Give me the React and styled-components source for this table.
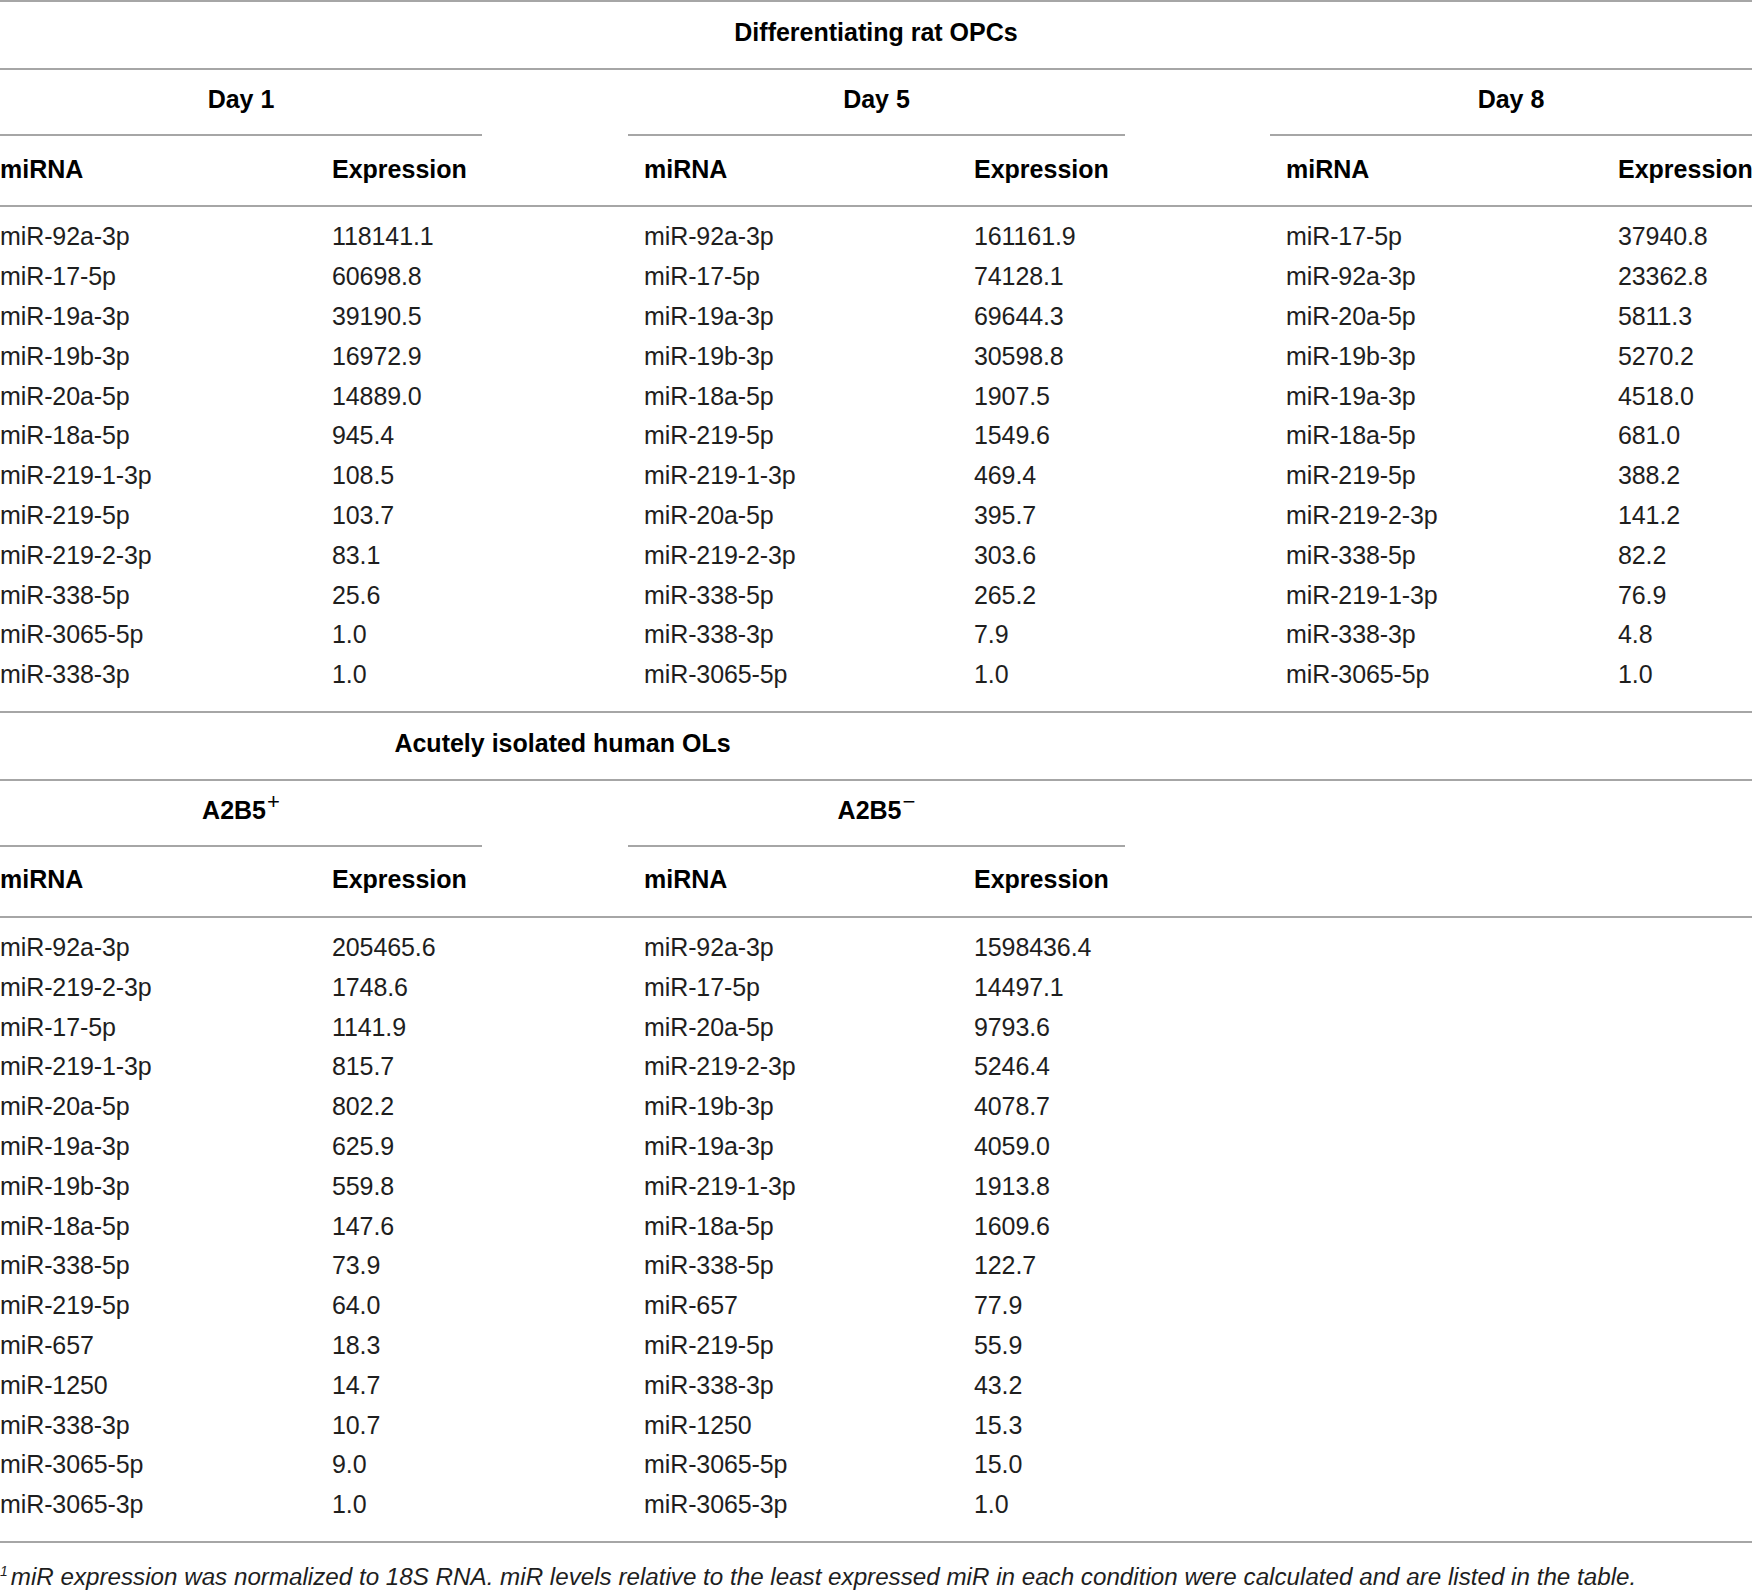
import React from 'react';
import styled, { createGlobalStyle } from 'styled-components';

// --- Data ---

const ratGroups = [
  {
    label: 'Day 1',
    rows: [
      ['miR-92a-3p', '118141.1'],
      ['miR-17-5p', '60698.8'],
      ['miR-19a-3p', '39190.5'],
      ['miR-19b-3p', '16972.9'],
      ['miR-20a-5p', '14889.0'],
      ['miR-18a-5p', '945.4'],
      ['miR-219-1-3p', '108.5'],
      ['miR-219-5p', '103.7'],
      ['miR-219-2-3p', '83.1'],
      ['miR-338-5p', '25.6'],
      ['miR-3065-5p', '1.0'],
      ['miR-338-3p', '1.0'],
    ],
  },
  {
    label: 'Day 5',
    rows: [
      ['miR-92a-3p', '161161.9'],
      ['miR-17-5p', '74128.1'],
      ['miR-19a-3p', '69644.3'],
      ['miR-19b-3p', '30598.8'],
      ['miR-18a-5p', '1907.5'],
      ['miR-219-5p', '1549.6'],
      ['miR-219-1-3p', '469.4'],
      ['miR-20a-5p', '395.7'],
      ['miR-219-2-3p', '303.6'],
      ['miR-338-5p', '265.2'],
      ['miR-338-3p', '7.9'],
      ['miR-3065-5p', '1.0'],
    ],
  },
  {
    label: 'Day 8',
    rows: [
      ['miR-17-5p', '37940.8'],
      ['miR-92a-3p', '23362.8'],
      ['miR-20a-5p', '5811.3'],
      ['miR-19b-3p', '5270.2'],
      ['miR-19a-3p', '4518.0'],
      ['miR-18a-5p', '681.0'],
      ['miR-219-5p', '388.2'],
      ['miR-219-2-3p', '141.2'],
      ['miR-338-5p', '82.2'],
      ['miR-219-1-3p', '76.9'],
      ['miR-338-3p', '4.8'],
      ['miR-3065-5p', '1.0'],
    ],
  },
];

const humanGroups = [
  {
    label: 'A2B5',
    sign: '+',
    rows: [
      ['miR-92a-3p', '205465.6'],
      ['miR-219-2-3p', '1748.6'],
      ['miR-17-5p', '1141.9'],
      ['miR-219-1-3p', '815.7'],
      ['miR-20a-5p', '802.2'],
      ['miR-19a-3p', '625.9'],
      ['miR-19b-3p', '559.8'],
      ['miR-18a-5p', '147.6'],
      ['miR-338-5p', '73.9'],
      ['miR-219-5p', '64.0'],
      ['miR-657', '18.3'],
      ['miR-1250', '14.7'],
      ['miR-338-3p', '10.7'],
      ['miR-3065-5p', '9.0'],
      ['miR-3065-3p', '1.0'],
    ],
  },
  {
    label: 'A2B5',
    sign: '\u2212',
    rows: [
      ['miR-92a-3p', '1598436.4'],
      ['miR-17-5p', '14497.1'],
      ['miR-20a-5p', '9793.6'],
      ['miR-219-2-3p', '5246.4'],
      ['miR-19b-3p', '4078.7'],
      ['miR-19a-3p', '4059.0'],
      ['miR-219-1-3p', '1913.8'],
      ['miR-18a-5p', '1609.6'],
      ['miR-338-5p', '122.7'],
      ['miR-657', '77.9'],
      ['miR-219-5p', '55.9'],
      ['miR-338-3p', '43.2'],
      ['miR-1250', '15.3'],
      ['miR-3065-5p', '15.0'],
      ['miR-3065-3p', '1.0'],
    ],
  },
];

// name column / value column for each group (grid lines 1,4,7)
const nameCol = [1, 4, 7];
const valueCol = [2, 5, 8];

// --- Styled Components ---

const GlobalStyle = createGlobalStyle`
  html, body {
    margin: 0;
    padding: 0;
    background: #ffffff;
  }
  body {
    width: 1752px;
    overflow: hidden;
    font-family: 'Liberation Sans', Arial, sans-serif;
    color: #1e1e1e;
  }
`;

const LINE = '2px solid #a6a6a6';

const Table = styled.div`
  width: 1752px;
  border-top: ${LINE};
`;

// full width band with a centered bold title
const TitleBand = styled.div`
  display: grid;
  grid-template-columns: ${(p) => p.$span}px 1fr;
  height: 66px;
  border-bottom: ${LINE};
`;

const TitleText = styled.div`
  display: flex;
  align-items: center;
  justify-content: center;
  padding-bottom: 5px;
  font-size: 25px;
  font-weight: bold;
  color: #000;
  line-height: 1;
`;

// shared 8 column grid: group | group | spacer | group | group | spacer | group | group
const Grid = styled.div`
  display: grid;
  grid-template-columns: 316px 166px 146px 330px 167px 145px 332px 150px;
`;

const GroupBand = styled(Grid)`
  height: 66px;
  padding-bottom: 2px;
`;

const GroupHead = styled.div`
  grid-column: ${(p) => p.$col} / span 2;
  display: flex;
  align-items: center;
  justify-content: center;
  padding-bottom: 5px;
  border-bottom: ${LINE};
  font-size: 25px;
  font-weight: bold;
  color: #000;
  line-height: 1;
`;

// the + / − after A2B5
const Sign = styled.span`
  font-size: 22px;
  font-weight: normal;
  line-height: 0;
  margin-left: 1px;
  position: relative;
  top: -8px;
`;

const HeaderBand = styled(Grid)`
  height: 67px;
  align-items: center;
  border-bottom: ${LINE};
`;

const HeadCell = styled.div`
  grid-column: ${(p) => p.$col};
  padding-left: ${(p) => (p.$col === 1 ? 0 : 16)}px;
  padding-bottom: 5px;
  font-size: 25px;
  font-weight: bold;
  color: #000;
  white-space: nowrap;
  line-height: 1;
`;

const Body = styled.div`
  padding: 10px 0 16px;
  border-bottom: ${LINE};
`;

const Row = styled(Grid)`
  height: 39.8px;
  align-items: center;
`;

const Cell = styled.div`
  grid-column: ${(p) => p.$col};
  padding-left: ${(p) => (p.$col === 1 ? 0 : 16)}px;
  font-size: 25px;
  line-height: 1;
  white-space: nowrap;
  letter-spacing: -0.1px;
`;

const Footnote = styled.p`
  margin: 21px 0 0 0;
  font-size: 24.2px;
  font-style: italic;
  line-height: 26px;
  height: 26px;
  color: #1e1e1e;
  white-space: nowrap;
`;

const Mark = styled.span`
  font-size: 14px;
  line-height: 0;
  margin-right: 3px;
  position: relative;
  top: -9px;
`;

// --- Component ---

const Section = ({ title, span, groups }) => {
  const count = Math.max(...groups.map((g) => g.rows.length));
  return (
    <>
      <TitleBand $span={span}>
        <TitleText>{title}</TitleText>
      </TitleBand>
      <GroupBand>
        {groups.map((g, i) => (
          <GroupHead key={i} $col={nameCol[i]}>
            {g.label}
            {g.sign && <Sign>{g.sign}</Sign>}
          </GroupHead>
        ))}
      </GroupBand>
      <HeaderBand>
        {groups.map((g, i) => (
          <React.Fragment key={i}>
            <HeadCell $col={nameCol[i]}>miRNA</HeadCell>
            <HeadCell $col={valueCol[i]}>Expression</HeadCell>
          </React.Fragment>
        ))}
      </HeaderBand>
      <Body>
        {Array.from({ length: count }).map((_, r) => (
          <Row key={r}>
            {groups.map((g, i) => (
              <React.Fragment key={i}>
                <Cell $col={nameCol[i]}>{g.rows[r][0]}</Cell>
                <Cell $col={valueCol[i]}>{g.rows[r][1]}</Cell>
              </React.Fragment>
            ))}
          </Row>
        ))}
      </Body>
    </>
  );
};

const App = () => {
  return (
    <>
      <GlobalStyle />
      <Table>
        <Section title="Differentiating rat OPCs" span={1752} groups={ratGroups} />
        <Section title="Acutely isolated human OLs" span={1125} groups={humanGroups} />
      </Table>
      <Footnote>
        <Mark>1</Mark>
        miR expression was normalized to 18S RNA. miR levels relative to the least expressed miR in
        each condition were calculated and are listed in the table.
      </Footnote>
    </>
  );
};

export default App;
